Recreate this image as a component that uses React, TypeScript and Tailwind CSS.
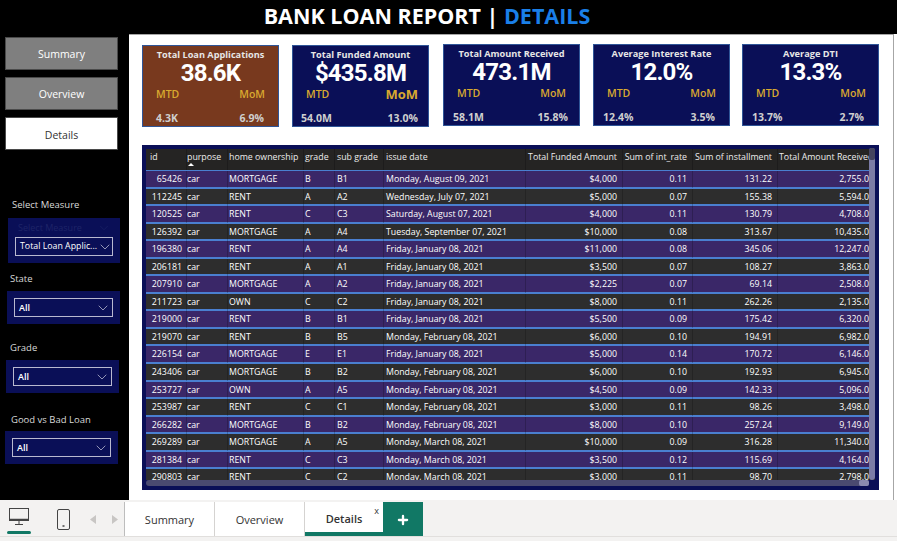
import React from 'react';
import { ChevronDown, Plus } from 'lucide-react';

const rows = [
  ['65426', 'MORTGAGE', 'B', 'B1', 'Monday, August 09, 2021', '$4,000', '0.11', '131.22', '2,755.0'],
  ['112245', 'RENT', 'A', 'A2', 'Wednesday, July 07, 2021', '$5,000', '0.07', '155.38', '5,594.0'],
  ['120525', 'RENT', 'C', 'C3', 'Saturday, August 07, 2021', '$4,000', '0.11', '130.79', '4,708.0'],
  ['126392', 'MORTGAGE', 'A', 'A4', 'Tuesday, September 07, 2021', '$10,000', '0.08', '313.67', '10,435.0'],
  ['196380', 'RENT', 'A', 'A4', 'Friday, January 08, 2021', '$11,000', '0.08', '345.06', '12,247.0'],
  ['206181', 'RENT', 'A', 'A1', 'Friday, January 08, 2021', '$3,500', '0.07', '108.27', '3,863.0'],
  ['207910', 'MORTGAGE', 'A', 'A2', 'Friday, January 08, 2021', '$2,225', '0.07', '69.14', '2,508.0'],
  ['211723', 'OWN', 'C', 'C2', 'Friday, January 08, 2021', '$8,000', '0.11', '262.26', '2,135.0'],
  ['219000', 'RENT', 'B', 'B1', 'Friday, January 08, 2021', '$5,500', '0.09', '175.42', '6,320.0'],
  ['219070', 'RENT', 'B', 'B5', 'Monday, February 08, 2021', '$6,000', '0.10', '194.91', '6,982.0'],
  ['226154', 'MORTGAGE', 'E', 'E1', 'Friday, January 08, 2021', '$5,000', '0.14', '170.72', '6,146.0'],
  ['243406', 'MORTGAGE', 'B', 'B2', 'Monday, February 08, 2021', '$6,000', '0.10', '192.93', '6,945.0'],
  ['253727', 'OWN', 'A', 'A5', 'Monday, February 08, 2021', '$4,500', '0.09', '142.33', '5,096.0'],
  ['253987', 'RENT', 'C', 'C1', 'Monday, February 08, 2021', '$3,000', '0.11', '98.26', '3,498.0'],
  ['266282', 'MORTGAGE', 'B', 'B2', 'Monday, February 08, 2021', '$8,000', '0.10', '257.24', '9,149.0'],
  ['269289', 'MORTGAGE', 'A', 'A5', 'Monday, March 08, 2021', '$10,000', '0.09', '316.28', '11,340.0'],
  ['281384', 'RENT', 'C', 'C3', 'Monday, March 08, 2021', '$3,500', '0.12', '115.69', '4,164.0'],
  ['290803', 'RENT', 'C', 'C2', 'Monday, March 08, 2021', '$3,000', '0.11', '98.70', '2,798.0'],
];

const gridCols =
  'grid grid-cols-[41px_41px_76px_31px_49px_142px_97px_70px_85px_92px] [&>div]:whitespace-nowrap [&>div]:border-r [&>div]:border-black/20';

const NavButton = ({ label, active, className }: { label: string; active?: boolean; className: string }) => (
  <div
    className={`flex h-[33px] w-[113px] items-center justify-center border border-[#4a4a4a] text-[10.5px] ${className} ${
      active ? 'bg-white text-[#333]' : 'bg-[#7f7f7f] text-white'
    }`}
  >
    {label}
  </div>
);

const Card = ({
  title,
  value,
  mtd,
  mom,
  brown,
  momBig,
  className,
  labelRow,
  valueRow,
}: {
  title: string;
  value: string;
  mtd: string;
  mom: string;
  brown?: boolean;
  momBig?: boolean;
  className: string;
  labelRow: string;
  valueRow: string;
}) => (
  <div
    className={`flex h-[82px] w-[137px] shrink-0 flex-col border border-[#2f5597] ${
      brown ? 'bg-[#78391e]' : 'bg-[#0a0f57]'
    } ${className}`}
  >
    <div className="mt-[2px] text-center text-[9.2px] font-bold leading-[14px] text-[#e6e6e6]">{title}</div>
    <div className="-mt-px text-center font-['Roboto',sans-serif] text-[24px] font-bold leading-[25px] tracking-[-0.8px] text-white">
      {value}
    </div>
    <div className={`mt-px flex justify-between text-[#d9a92f] ${labelRow}`}>
      <span className="text-[10.5px] font-semibold leading-[14px]">MTD</span>
      <span className={`${momBig ? 'text-[13px] font-bold' : 'text-[10.5px] font-semibold'} leading-[14px]`}>MoM</span>
    </div>
    <div className={`mt-[10px] flex justify-between text-[10.5px] font-bold leading-[14px] text-[#cfcfcf] ${valueRow}`}>
      <span>{mtd}</span>
      <span>{mom}</span>
    </div>
  </div>
);

const Slicer = ({
  label,
  value,
  className,
  labelClass,
  boxClass,
}: {
  label: string;
  value: string;
  className: string;
  labelClass: string;
  boxClass: string;
}) => (
  <div className={className}>
    <div className={`text-[9.5px] leading-[14px] text-[#d9d9d9] ${labelClass}`}>{label}</div>
    <div className={`h-[33px] w-[113px] bg-[#0a0f57] px-[7px] pt-[7px] ${boxClass}`}>
      <div className="flex h-[19px] items-center justify-between border border-[#b9b9d0] pl-[4px] pr-[1px] text-[9px] font-semibold text-white">
        <span>{value}</span>
        <ChevronDown size={16} strokeWidth={1} className="text-[#d9d9e8]" />
      </div>
    </div>
  </div>
);

export default function App() {
  return (
    <div className="flex h-[541px] w-[897px] flex-col overflow-hidden bg-white font-['Open_Sans',sans-serif]">
      <div className="flex h-[34px] shrink-0 items-center justify-center bg-black pb-[2px] pr-[43px] text-[21.5px] font-bold text-white">
        <span>
          BANK LOAN REPORT | <span className="text-[#1a7fe8]">DETAILS</span>
        </span>
      </div>

      <div className="flex h-[466px] shrink-0">
        {/* sidebar */}
        <div className="flex w-[129px] shrink-0 flex-col bg-black pl-[5px] pt-[3px]">
          <NavButton label="Summary" className="pt-[3px]" />
          <NavButton label="Overview" className="mt-[7px] pt-[3px]" />
          <NavButton label="Details" active className="mt-[7px] pt-[4px]" />

          <div className="ml-[7px] mt-[48px] text-[9.5px] leading-[14px] text-[#d9d9d9]">Select Measure</div>
          <div className="ml-[3px] mt-[6px] h-[45px] w-[112px] bg-[#0a0f57] px-[7px]">
            <div className="flex h-[19px] items-center justify-between pl-[3px] pr-[2px] pt-px text-[9px] text-[#1e2468]">
              <span>Select Measure</span>
              <ChevronDown size={14} strokeWidth={1} />
            </div>
            <div className="flex h-[19px] items-center justify-between border border-[#b9b9d0] pl-[4px] pr-0 text-[8.8px] text-white">
              <span className="whitespace-nowrap">Total Loan Applic...</span>
              <ChevronDown size={16} strokeWidth={1} className="shrink-0 text-[#d9d9e8]" />
            </div>
          </div>

          <Slicer label="State" value="All" className="ml-[2px] mt-[9px]" labelClass="ml-[3px]" boxClass="mt-[5px]" />
          <Slicer label="Grade" value="All" className="ml-[1px] mt-[17px]" labelClass="ml-[4px]" boxClass="mt-[5px]" />
          <Slicer label="Good vs Bad Loan" value="All" className="mt-[20px]" labelClass="ml-[6px]" boxClass="mt-[4px]" />
        </div>

        {/* report canvas */}
        <div className="flex w-[765px] shrink-0 flex-col border-r border-t border-[#a6a6a6] pl-[13px]">
          <div className="flex items-start">
            <Card title="Total Loan Applications" value="38.6K" mtd="4.3K" mom="6.9%" brown className="mt-[10px]" labelRow="px-[13px]" valueRow="pl-[13px] pr-[14px]" />
            <Card title="Total Funded Amount" value="$435.8M" mtd="54.0M" mom="13.0%" momBig className="ml-[13px] mt-[10px]" labelRow="pl-[13px] pr-[10px]" valueRow="pl-[8px] pr-[10px]" />
            <Card title="Total Amount Received" value="473.1M" mtd="58.1M" mom="15.8%" className="ml-[14px] mt-[9px]" labelRow="pl-[13px] pr-[13px]" valueRow="pl-[9px] pr-[11px]" />
            <Card title="Average Interest Rate" value="12.0%" mtd="12.4%" mom="3.5%" className="ml-[13px] mt-[9px]" labelRow="pl-[13px] pr-[13px]" valueRow="pl-[9px] pr-[14px]" />
            <Card title="Average DTI" value="13.3%" mtd="13.7%" mom="2.7%" className="ml-[12px] mt-[9px]" labelRow="pl-[13px] pr-[12px]" valueRow="pl-[9px] pr-[14px]" />
          </div>

          {/* table */}
          <div className="relative mt-[18px] h-[345px] w-[737px] overflow-hidden bg-[#0a0f57] p-[4px] pb-[10px]">
            <div className="h-full w-full overflow-hidden bg-[#2d2d2d] text-[8.8px] text-white">
              <div className={`${gridCols} h-[22px] border-b border-[#4a7fd0] bg-[#252423] leading-[17px] text-[#ececec]`}>
                <div className="pl-[4px]">id</div>
                <div className="relative">
                  purpose
                  <svg viewBox="0 0 8 4" className="absolute left-px top-[14px] h-[3px] w-[6px]">
                    <path d="M0 4 L4 0 L8 4 Z" fill="#ffffff" />
                  </svg>
                </div>
                <div className="pl-px">home ownership</div>
                <div className="pl-px">grade</div>
                <div className="pl-[2px]">sub grade</div>
                <div className="pl-[2px]">issue date</div>
                <div className="pr-[5px] text-right">Total Funded Amount</div>
                <div className="pr-[5px] text-right">Sum of int_rate</div>
                <div className="pr-[5px] text-right">Sum of installment</div>
                <div className="overflow-hidden pl-px">Total Amount Received</div>
              </div>
              {rows.map((r, i) => (
                <div
                  key={r[0]}
                  className={`${gridCols} h-[17.55px] border-b-2 border-[#4a7fd0] leading-[17px] ${
                    i % 2 === 0 ? 'bg-[#3a2768]' : 'bg-[#2d2d2d]'
                  }`}
                >
                  <div className="pr-[4px] text-right">{r[0]}</div>
                  <div>car</div>
                  <div className="pl-px">{r[1]}</div>
                  <div className="pl-px">{r[2]}</div>
                  <div className="pl-[2px]">{r[3]}</div>
                  <div className="pl-[2px]">{r[4]}</div>
                  <div className="pr-[5px] text-right">{r[5]}</div>
                  <div className="pr-[5px] text-right">{r[6]}</div>
                  <div className="pr-[5px] text-right">{r[7]}</div>
                  <div className="overflow-hidden text-right">{r[8]}</div>
                </div>
              ))}
            </div>
            {/* scrollbars */}
            <div className="absolute right-[4px] top-[3px] h-[332px] w-[6px] rounded-[3px] bg-[#7c7ca6]">
              <div className="h-[12px] w-[6px] rounded-[2px] bg-[#44445e]" />
            </div>
            <div className="absolute bottom-[4px] left-[4px] flex h-[6px] w-[723px] justify-end rounded-[3px] bg-[#4a4a70]">
              <div className="h-[6px] w-[10px] rounded-[2px] bg-[#8a8ab0]" />
            </div>
          </div>
        </div>
      </div>

      {/* tab bar */}
      <div className="flex-1 bg-[#f3f2f1] pt-[2px]">
        <div className="flex h-[35px] items-stretch border-b border-[#e1dfdd] text-[11px] text-[#333]">
          <div className="flex w-[125px] shrink-0 items-center border-r border-[#bdbdbd]">
            <div className="relative ml-[7px] flex h-[35px] w-[24px] justify-center pt-[6px]">
              <svg viewBox="0 0 20 17" className="h-[17px] w-[20px]" fill="none" stroke="#444" strokeWidth="1">
                <rect x="0.5" y="0.5" width="19" height="12" />
                <path d="M0 11.5 H20" strokeWidth="1.5" />
                <path d="M10 13 V16 M6 16.5 H14" />
              </svg>
              <div className="absolute bottom-[3px] h-[3px] w-[24px] rounded-full bg-[#117865]" />
            </div>
            <svg viewBox="0 0 13 21" className="ml-[26px] h-[21px] w-[13px]" fill="none" stroke="#444" strokeWidth="1">
              <rect x="0.5" y="0.5" width="12" height="20" rx="1.5" />
              <path d="M5.5 17 H7.5" strokeWidth="1.5" />
            </svg>
            <svg viewBox="0 0 6 9" className="ml-[20px] h-[9px] w-[6px]">
              <path d="M6 0 V9 L0 4.5 Z" fill="#c8c6c4" />
            </svg>
            <svg viewBox="0 0 6 9" className="ml-[16px] h-[9px] w-[6px]">
              <path d="M0 0 V9 L6 4.5 Z" fill="#c8c6c4" />
            </svg>
          </div>
          <div className="flex w-[90px] items-center justify-center border-r border-[#d5d3d1] bg-white pt-[2px]">Summary</div>
          <div className="flex w-[90px] items-center justify-center border-r border-[#d5d3d1] bg-white pt-[2px]">Overview</div>
          <div className="relative flex w-[78px] items-center justify-center border-b-[4px] border-[#117865] bg-white pt-[5px] font-semibold">
            Details
            <span className="absolute right-[4px] top-[3px] text-[9px] font-normal leading-[12px]">x</span>
          </div>
          <div className="flex w-[40px] items-center justify-center bg-[#117865] pt-[2px]">
            <Plus size={14} strokeWidth={4} className="text-white" />
          </div>
        </div>
      </div>
    </div>
  );
}
